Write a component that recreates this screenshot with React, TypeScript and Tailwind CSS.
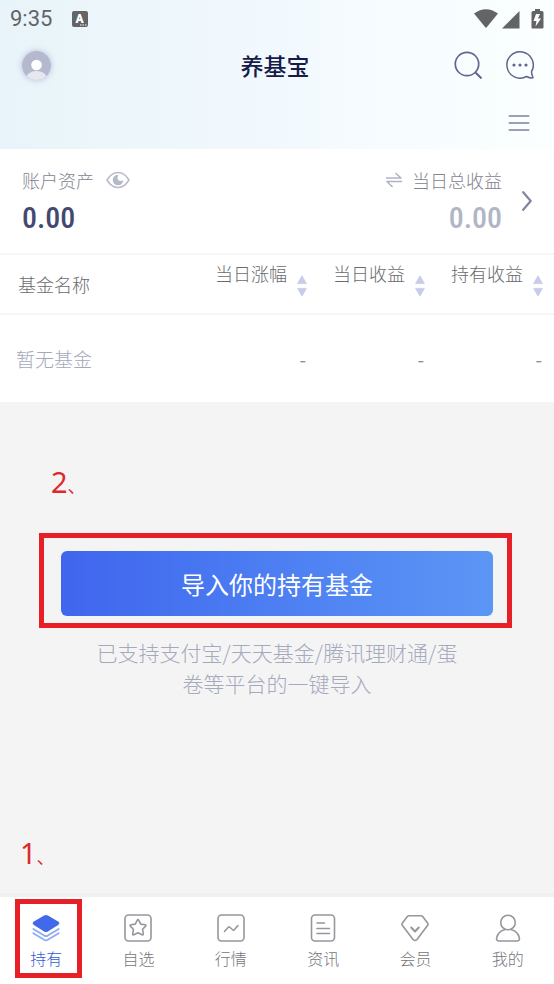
import type { ReactNode } from "react";

const columns = ["当日涨幅", "当日收益", "持有收益"];

function SortArrows() {
  return (
    <svg width="10" height="22" viewBox="0 0 10 22" fill="#c9cbea" aria-hidden="true">
      <path d="M5 .8 9.4 8.6H.6Z" stroke="#c9cbea" strokeWidth=".8" strokeLinejoin="round" />
      <path d="M5 21.2.6 13.4h8.8Z" stroke="#c9cbea" strokeWidth=".8" strokeLinejoin="round" />
    </svg>
  );
}

function NavIcon({ children }: { children: ReactNode }) {
  return (
    <svg
      width="28"
      height="28"
      viewBox="0 0 28 28"
      fill="none"
      stroke="#96979c"
      strokeWidth="1.6"
      strokeLinecap="round"
      strokeLinejoin="round"
      aria-hidden="true"
    >
      {children}
    </svg>
  );
}

const navItems = [
  {
    label: "持有",
    icon: (
      <NavIcon>
        <g stroke="#8fabf5" strokeWidth="1.8">
          <path d="m1.3 19.2 10.9 6.6q1.8 1 3.6 0l10.9-6.6" />
          <path d="m1.3 15 10.9 6.6q1.8 1 3.6 0L26.7 15" />
        </g>
        <path
          d="M12.1 1.5q1.9-1 3.8 0l9.8 5.7q3 2 0 4L15.9 17.5q-1.9 1.1-3.8 0L2.3 11.2q-3-2 0-4Z"
          fill="#4169ea"
          stroke="none"
        />
      </NavIcon>
    ),
  },
  {
    label: "自选",
    icon: (
      <NavIcon>
        <rect x="1" y="1" width="26" height="26" rx="3.5" />
        <path d="M13.3 6.2q.7-1.2 1.4 0l2 3.9 4.4.7q1.3.3.5 1.3l-3 3.2.7 4.7q0 1.2-1.2.8L14 18.7l-4.1 2.1q-1.2.4-1.2-.8l.7-4.7-3-3.2q-.8-1 .5-1.3l4.400-.7Z" />
      </NavIcon>
    ),
  },
  {
    label: "行情",
    icon: (
      <NavIcon>
        <rect x="1" y="1" width="26" height="26" rx="3.5" />
        <path d="m7.5 17.500 4-4.500q.5-.5 1 0l3.500 3q.5.5 1 0l4-4.500" />
      </NavIcon>
    ),
  },
  {
    label: "资讯",
    icon: (
      <NavIcon>
        <rect x="2.5" y="1" width="23" height="26" rx="3.5" />
        <path d="M8 9h7.5M8 14.5h12.5M8 19.5h12.5" />
      </NavIcon>
    ),
  },
  {
    label: "会员",
    icon: (
      <NavIcon>
        <path d="M8 1.800h12q1 0 1.700.8l5 6.600q.7 1 0 2L16 25.500q-2 2-4 0L1.300 11.200q-.7-1 0-2l5-6.600Q7 1.800 8 1.800Z" />
        <path d="m10.2 13.5 3.800 4 3.800-4" strokeWidth="2" />
      </NavIcon>
    ),
  },
  {
    label: "我的",
    icon: (
      <NavIcon>
        <circle cx="14" cy="8.5" r="7.3" />
        <path d="M10.500 15.800C6 17 3.400 20 2.600 24.200 2.300 26 3.300 27 5 27h18c1.700 0 2.700-1 2.400-2.800-.8-4.200-3.400-7.200-7.900-8.400" />
      </NavIcon>
    ),
  },
];

function StatusBar() {
  return (
    <div className="flex h-9 items-center justify-between px-2.5 pt-0.5 text-[#636467]">
      <div className="flex items-center gap-5">
        <span className="font-['Roboto',sans-serif] text-[22px] leading-8">9:35</span>
        <svg width="16" height="16" viewBox="0 0 16 16" aria-hidden="true">
          <rect width="16" height="16" rx="2" fill="#636467" />
          <text x="7.5" y="11.5" textAnchor="middle" fill="#fff" className="font-['Roboto',sans-serif] text-xs font-black">
            A
          </text>
          <path d="M8 14h1.500M10.500 14H12M13 14h1.500" stroke="#fff" strokeWidth="1.2" />
        </svg>
      </div>
      <svg width="70" height="22" viewBox="0 0 70 22" fill="currentColor" aria-hidden="true">
        <path d="M0 5.500Q12-3 24 5.500L12.500 19.500q-.5.5-1 0Z" />
        <path d="M28 20.500 45.500 3v17.500Z" />
        <path d="M61 1h5v2h2q1.500 0 1.500 1.500v15q0 1-1 1H58.500q-1 0-1-1v-15Q57.500 3 59 3h2Z" />
        <path d="m62 6-2.500 7h3l-1 5.500 5.500-8h-3L66 6Z" fill="#fff" />
      </svg>
    </div>
  );
}

function Header() {
  return (
    <header className="bg-linear-to-r from-[#e8f4f9] via-[#f2f9fe] to-[#fbffff]">
      <StatusBar />
      <div className="grid h-[58px] grid-cols-[1fr_auto_1fr] items-center pr-5 pl-4">
        <button type="button" aria-label="头像" className="ml-1.5 w-fit rounded-full shadow-[0_0_6px_#b7bcd8]">
          <svg width="29" height="29" viewBox="0 0 29 29" aria-hidden="true">
            <defs>
              <clipPath id="avatar">
                <circle cx="14.5" cy="14.5" r="14.5" />
              </clipPath>
            </defs>
            <g clipPath="url(#avatar)">
              <path fill="#b4b9ce" d="M0 0h29v29H0z" />
              <ellipse cx="14.5" cy="27.5" rx="10.5" ry="7.5" fill="#e6e7ef" />
              <circle cx="14.5" cy="14" r="5.3" fill="#fff" />
            </g>
          </svg>
        </button>
        <h1 className="text-[23px] font-medium text-[#161b47]">养基宝</h1>
        <div className="flex items-center justify-end gap-6">
          <button type="button" aria-label="搜索">
            <svg width="28" height="28" viewBox="0 0 28 28" fill="none" stroke="#62668f" strokeWidth="1.7" aria-hidden="true">
              <circle cx="13" cy="13" r="11.7" />
              <path d="m21.5 21.5 6 6" strokeWidth="2" />
            </svg>
          </button>
          <button type="button" aria-label="消息">
            <svg width="28" height="28" viewBox="0 0 28 28" fill="none" stroke="#62668f" strokeWidth="1.5" strokeLinejoin="round" aria-hidden="true">
              <path d="M25.500 20.600A13.200 13.200 0 1 0 20.500 25.500q3.500 1.700 6 1.400.9-.2.300-1.100-1.200-2.500-1.300-5.200Z" />
              <g fill="#62668f" stroke="none">
                <circle cx="8" cy="14" r="1.6" />
                <circle cx="14" cy="14" r="1.6" />
                <circle cx="20" cy="14" r="1.6" />
              </g>
            </svg>
          </button>
        </div>
      </div>
      <div className="flex h-[55px] items-center justify-end px-6 pt-0.5">
        <button type="button" aria-label="菜单">
          <svg width="22" height="18" viewBox="0 0 22 18" stroke="#9c9fb5" strokeWidth="2" strokeLinecap="round" aria-hidden="true">
            <path d="M1.500 2h19M1.500 9h19M1.500 16h19" />
          </svg>
        </button>
      </div>
    </header>
  );
}

function Account() {
  return (
    <section className="flex items-center border-b-2 border-[#f7f7f9] bg-white px-[22px] py-[19px]">
      <div className="flex-1">
        <div className="flex items-center gap-3 text-lg leading-6 font-light text-[#82838f]">
          账户资产
          <button type="button" aria-label="隐藏金额">
            <svg width="24" height="18" viewBox="0 0 24 18" aria-hidden="true">
              <path d="M1 9Q5.500 1.500 12 1.500T23 9q-4.500 7.500-11 7.500T1 9Z" fill="none" stroke="#b9bdcb" strokeWidth="1.6" />
              <path d="M12 3.700a5.300 5.300 0 1 0 5.300 5.300q-1.500 1.400-3.600.8-2.800-1-2-4Q12 4.500 12 3.700Z" fill="#b4b9c9" />
            </svg>
          </button>
        </div>
        <div className="mt-2.5 font-['Roboto_Condensed','Roboto',sans-serif] text-[30px] leading-8 font-medium text-[#434a71]">
          0.00
        </div>
      </div>
      <div className="text-right">
        <div className="flex items-center gap-2.5 text-lg leading-6 font-light text-[#82838f]">
          <svg width="16" height="16" viewBox="0 0 16 16" fill="none" stroke="#b0b2c3" strokeWidth="1.5" strokeLinejoin="round" aria-hidden="true">
            <path d="M0 6h15L9.500 1M16 9.500H1L6.500 15" />
          </svg>
          当日总收益
        </div>
        <div className="mt-2.5 font-['Roboto_Condensed','Roboto',sans-serif] text-[30px] leading-8 font-medium text-[#b1b6c5]">
          0.00
        </div>
      </div>
      <button type="button" aria-label="查看详情" className="ml-5">
        <svg width="10" height="20" viewBox="0 0 10 20" fill="none" stroke="#82859e" strokeWidth="2.2" strokeLinecap="round" strokeLinejoin="round" aria-hidden="true">
          <path d="m1.2 1.2 7.5 8.800-7.500 8.800" />
        </svg>
      </button>
    </section>
  );
}

function FundTable() {
  return (
    <table className="w-full table-fixed bg-white text-lg leading-6 font-light">
      <thead>
        <tr className="h-[59px] border-b-2 border-[#f5f5fb] text-[#6a6b70]">
          <th className="pl-[18px] text-left font-light">基金名称</th>
          {columns.map((column) => (
            <th key={column} className="w-[118px] pt-1.5 pr-[11px] align-top font-light">
              <button type="button" className="flex h-9 w-full items-start justify-end gap-2.5 whitespace-nowrap">
                {column}
                <span className="self-end">
                  <SortArrows />
                </span>
              </button>
            </th>
          ))}
        </tr>
      </thead>
      <tbody>
        <tr className="h-[88px] text-[19px] text-[#a4a8ba]">
          <td className="pl-4">暂无基金</td>
          {columns.map((column) => (
            <td key={column} className="pr-3 text-right font-normal text-[#8d8e99]">
              -
            </td>
          ))}
        </tr>
      </tbody>
    </table>
  );
}

function StepLabel({ step }: { step: number }) {
  return (
    <p className="font-['Noto_Sans','Noto_Sans_CJK_SC',sans-serif] text-[29px] leading-10 text-[#dc2a2c]">
      {step}
      <span className="text-lg">、</span>
    </p>
  );
}

function BottomNav() {
  return (
    <nav className="grid grid-cols-6 border-t-4 border-[#f0f0f0] bg-white pb-3.5">
      {navItems.map((item, index) => (
        <a
          key={item.label}
          href="#"
          className={`relative flex flex-col items-center gap-1 pt-[17px] text-base leading-6 font-light ${
            index === 0 ? "text-[#3559d8]" : "text-[#75767b]"
          }`}
        >
          {item.icon}
          {item.label}
          {index === 0 ? (
            <span className="absolute top-0.5 -bottom-2 left-[15px] w-[67px] border-[5px] border-[#e71f27]" />
          ) : null}
        </a>
      ))}
    </nav>
  );
}

export default function App() {
  return (
    <div className="flex min-h-screen flex-col bg-[#f4f4f4] font-['Noto_Sans_CJK_SC',sans-serif]">
      <Header />
      <Account />
      <FundTable />
      <main className="flex flex-1 flex-col pt-15">
        <div className="pl-[51px]">
          <StepLabel step={2} />
        </div>
        <div className="mt-[31px] mr-[42px] ml-[39px] border-[5px] border-[#e71f27] pt-[13px] pr-3.5 pb-[7px] pl-[17px]">
          <button
            type="button"
            className="h-[65px] w-full rounded-md bg-linear-to-r from-[#4065ee] to-[#5c96f5] text-2xl text-white"
          >
            导入你的持有基金
          </button>
        </div>
        <p className="mx-auto mt-[9px] max-w-[380px] text-center text-[21px] leading-[31px] font-light text-[#a5a9bc]">
          已支持支付宝/天天基金/腾讯理财通/蛋
          <br />
          卷等平台的一键导入
        </p>
        <div className="mt-auto pb-5 pl-5">
          <StepLabel step={1} />
        </div>
      </main>
      <BottomNav />
    </div>
  );
}
